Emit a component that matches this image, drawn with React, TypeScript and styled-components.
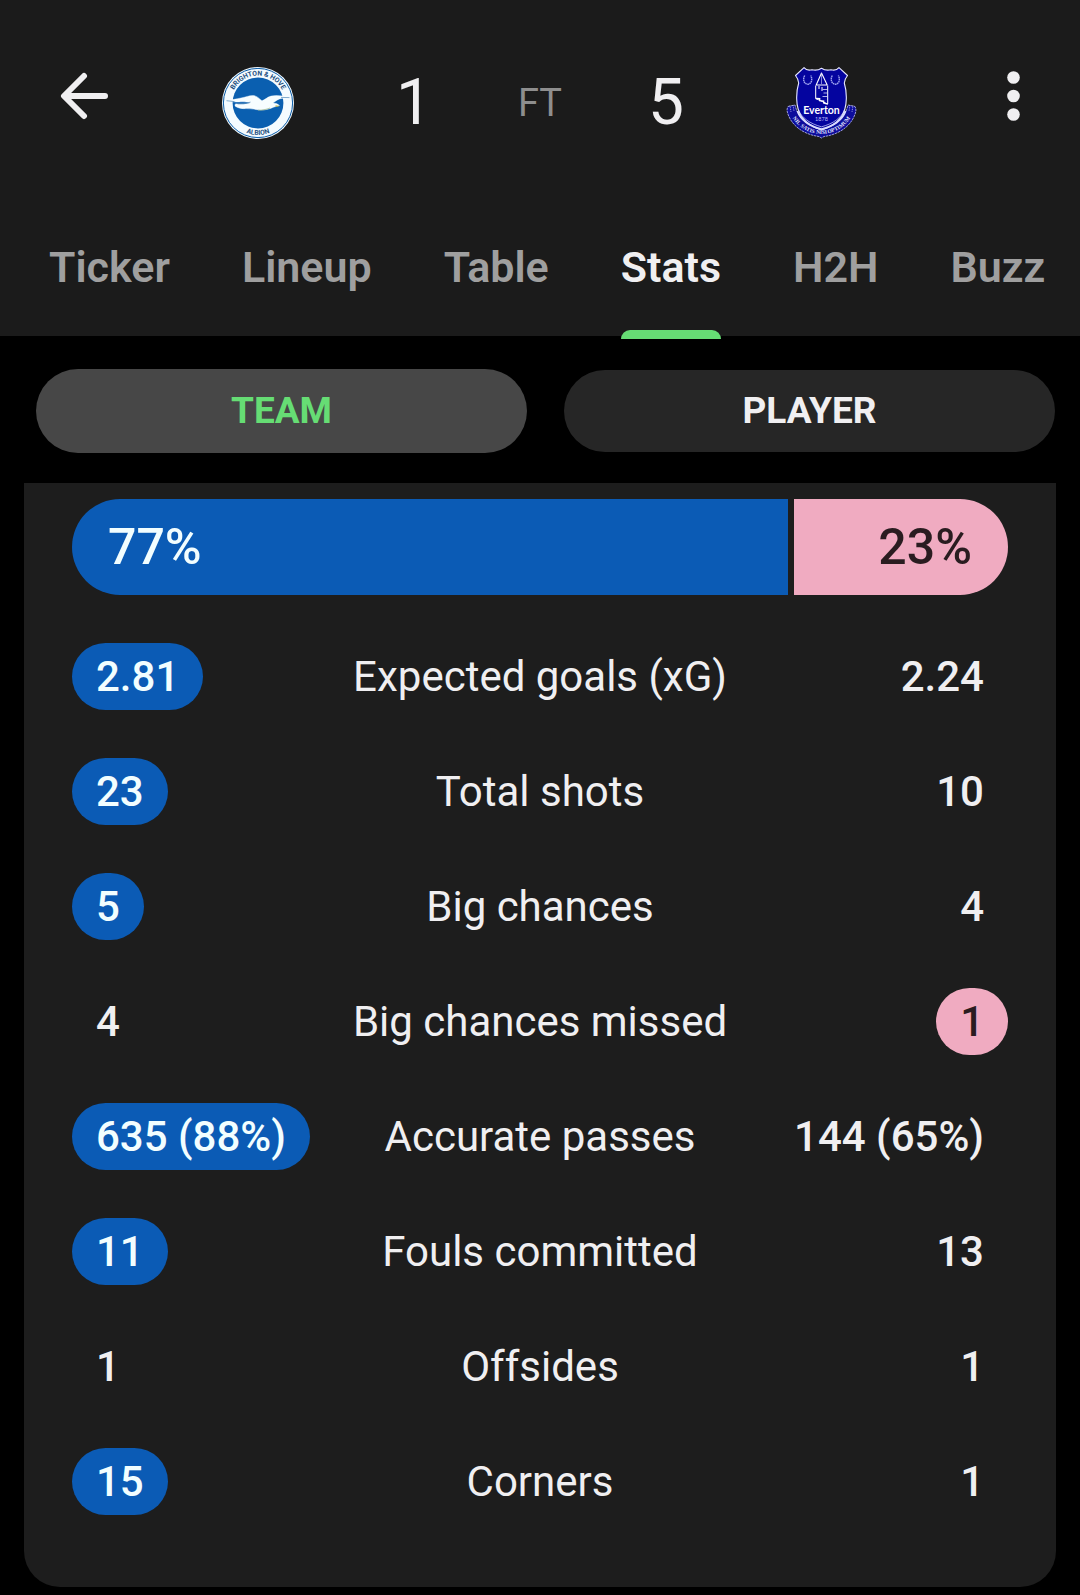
import React, { useState } from 'react';
import styled, { createGlobalStyle } from 'styled-components';

const color = {
  page: '#000000',
  header: '#1b1b1b',
  card: '#1d1d1d',
  text: '#f0eff1',
  muted: '#9f9f9f',
  faint: '#8e8e8e',
  accent: '#66dd74',
  home: '#0b5bb5',
  homeText: '#f2feff',
  away: '#f0abc1',
  awayText: '#2a1c20',
};

const GlobalStyle = createGlobalStyle`
  *, *::before, *::after { box-sizing: border-box; }
  body {
    margin: 0;
    background: ${color.page};
    color: ${color.text};
    font-family: Roboto, 'Liberation Sans', sans-serif;
  }
  button {
    margin: 0;
    padding: 0;
    border: 0;
    background: none;
    color: inherit;
    font: inherit;
    cursor: pointer;
  }
`;

const Header = styled.header`
  display: flex;
  flex-direction: column;
  background: ${color.header};
`;

const TopBar = styled.div`
  display: flex;
  align-items: center;
  justify-content: space-between;
  height: 192px;
  padding: 0 60px;
`;

const IconButton = styled.button<{ $end?: boolean }>`
  display: flex;
  justify-content: ${(p) => (p.$end ? 'flex-end' : 'flex-start')};
  width: 48px;
  color: ${color.text};
`;

const Match = styled.div`
  display: flex;
  align-items: center;
  gap: 102px;
  padding-top: 14px;
`;

const Result = styled.div`
  display: flex;
  align-items: center;
  gap: 86px;
`;

const Score = styled.span`
  font-size: 64px;
  line-height: 72px;
`;

const Status = styled.span`
  color: ${color.faint};
  font-size: 38px;
  line-height: 48px;
`;

const Tabs = styled.nav`
  display: flex;
  gap: 72px;
  margin-bottom: -3px;
  padding: 0 0 0 49px;
  overflow-x: auto;
  scrollbar-width: none;
`;

const Tab = styled.button<{ $active: boolean }>`
  position: relative;
  flex: none;
  padding: 51px 0 48px;
  color: ${(p) => (p.$active ? color.text : color.muted)};
  font-size: 43px;
  font-weight: 600;
  line-height: 48px;

  &::after {
    content: '';
    display: ${(p) => (p.$active ? 'block' : 'none')};
    position: absolute;
    right: 0;
    bottom: 0;
    left: 0;
    height: 9px;
    border-radius: 9px 9px 0 0;
    background: ${color.accent};
  }
`;

const Toggle = styled.div`
  display: flex;
  gap: 36px;
  padding: 33px 24px 30px 36px;
`;

const ToggleButton = styled.button<{ $active: boolean }>`
  flex: 1;
  height: 84px;
  border: ${(p) => (p.$active ? '0' : '1px solid transparent')};
  border-radius: 42px;
  background: ${(p) => (p.$active ? '#474747' : '#262626')};
  background-clip: padding-box;
  color: ${(p) => (p.$active ? color.accent : color.text)};
  font-size: 37px;
  font-weight: 700;
  line-height: 42px;
`;

const Card = styled.main`
  margin: 0 24px 8px;
  padding: 16px 48px 72px;
  border-radius: 0 0 36px 36px;
  background: ${color.card};
`;

const Possession = styled.div<{ $home: number; $away: number }>`
  display: grid;
  grid-template-columns: ${(p) => `minmax(0, ${p.$home}fr) minmax(0, ${p.$away}fr)`};
  gap: 6px;
  height: 96px;
  margin-bottom: 48px;
  border-radius: 48px;
  overflow: hidden;
`;

const Share = styled.div<{ $side: 'home' | 'away' }>`
  display: flex;
  align-items: center;
  justify-content: ${(p) => (p.$side === 'home' ? 'flex-start' : 'flex-end')};
  padding: 0 36px;
  background: ${(p) => color[p.$side]};
  color: ${(p) => (p.$side === 'home' ? color.homeText : color.awayText)};
  font-size: 50px;
  font-weight: 500;
  line-height: 56px;
`;

const Table = styled.table`
  display: block;
  width: 100%;
`;

const Rows = styled.tbody`
  display: flex;
  flex-direction: column;
  gap: 48px;
`;

const Row = styled.tr`
  display: grid;
  grid-template-columns: 1fr auto 1fr;
  align-items: center;
`;

const Label = styled.th`
  padding: 0;
  font-size: 42px;
  font-weight: 400;
  line-height: 49px;
`;

const Cell = styled.td<{ $side: 'home' | 'away' }>`
  display: flex;
  justify-content: ${(p) => (p.$side === 'home' ? 'flex-start' : 'flex-end')};
  padding: 0;
`;

const Value = styled.span<{ $lead?: 'home' | 'away' }>`
  padding: 9px 24px;
  border-radius: 34px;
  background: ${(p) => (p.$lead ? color[p.$lead] : 'transparent')};
  color: ${(p) =>
    p.$lead === 'home' ? color.homeText : p.$lead === 'away' ? color.awayText : color.text};
  font-size: 42px;
  font-weight: 500;
  line-height: 49px;
  white-space: nowrap;
`;

const Crest = styled.svg`
  display: block;
  flex: none;
  width: 72px;
  height: 72px;
`;

const BackIcon = () => (
  <svg width="48" height="48" viewBox="0 0 48 48" fill="none" stroke="currentColor" strokeWidth="6" strokeLinecap="round" strokeLinejoin="round" aria-hidden="true">
    <path d="M24 4 4 24l20 20M5 24h40" />
  </svg>
);

const MoreIcon = () => (
  <svg width="13" height="50" viewBox="0 0 13 50" fill="currentColor" aria-hidden="true">
    <circle cx="6.5" cy="6.5" r="6.3" />
    <circle cx="6.5" cy="25" r="6.3" />
    <circle cx="6.5" cy="43.5" r="6.3" />
  </svg>
);

const BrightonCrest = () => (
  <Crest viewBox="0 0 72 72" role="img" aria-label="Brighton &amp; Hove Albion">
    <defs>
      <path id="bha-top" d="M8.5 36a27.5 27.5 0 0 1 55 0" />
      <path id="bha-bottom" d="M4 36a32 32 0 0 0 64 0" />
    </defs>
    <circle cx="36" cy="36" r="36" fill="#f4fbff" />
    <circle cx="36" cy="36" r="34.6" fill="none" stroke="#0a5ca8" strokeWidth="1" />
    <circle cx="36" cy="36" r="25.4" fill="#0a5fb0" />
    <g fill="#1d4f80" fontFamily="Roboto, sans-serif" fontWeight="700" textAnchor="middle">
      <text fontSize="6.8"><textPath href="#bha-top" startOffset="50%">BRIGHTON &amp; HOVE</textPath></text>
      <text fontSize="6.8"><textPath href="#bha-bottom" startOffset="50%">ALBION</textPath></text>
    </g>
    <path
      fill="#f7fdff"
      stroke="#f7fdff"
      strokeWidth=".4"
      strokeLinejoin="round"
      d="M4.5 33.6C10 33 14 31.8 19 31c5-.9 8-2.6 12.5-2.4 3.600.3 5.500 2.800 8.500 5.200 2.500-.6 5-3.600 9-4.700 5-1.300 12-.4 18.500 1.300-3.500.8-7 .5-10 1.500-3 1.100-4.500 2.800-6.500 4.200 2.500 0 4.500.8 6.500 2.400-2 .7-4 1-6 1.700-4 1.800-8 3-13 2.800-5-.3-9-1.500-14-1.400-4 .2-8-.2-11-2.200-.8-.8-.7-1.900.2-2.600 5 1 10 .4 14.500-.9-3-1-7-1.300-11-1-4.500.1-8.500.1-12.700-1.300z"
    />
    <path d="M14.500 36.300c5 .6 9.500.3 14-1.200M4.500 33.700l8 .9M59 30.400l8.500.2" fill="none" stroke="#4d86b8" strokeWidth=".7" />
    <path d="M53.500 38.200l4.300.8-4 .9z" fill="#c3b64a" />
    <path d="M36 43.200c4 .1 8-.6 12-2.200" fill="none" stroke="#9fb98a" strokeWidth=".7" />
  </Crest>
);

const motto = [
  { word: 'NIL', at: '11%' },
  { word: 'SATIS', at: '30%' },
  { word: 'NISI', at: '50%' },
  { word: 'OPTIMUM', at: '77%' },
];

const EvertonCrest = () => (
  <Crest viewBox="0 0 72 72" role="img" aria-label="Everton">
    <defs>
      <path id="efc-motto" d="M5 48a34 34 0 0 0 61 0" />
    </defs>
    <path
      d="M2 39.500l7-1.500c3 13 13 22 26.500 24.500C49 60 59 51 62 38l7 1.500c1.500 3 .8 5.200.4 6.500C65.500 59 53 67.500 38 69.500l-2.500 1.500-2.500-1.500C18 67.500 5.500 59 1.600 46c-.4-1.300-1.100-3.500.4-6.500z"
      fill="#0d0d9c"
      stroke="#a9abe8"
      strokeWidth=".9"
      strokeDasharray="2.500 .7"
    />
    <path
      d="M35.500 1.200c-3 2-6.500 2.300-9.500 1.500-3 .8-6 .3-8-2L9.500 8.500c2 2.500 3 4.500 3.200 7.500-1.500 5-2.200 10-2 16 .3 14.500 6.500 25 24.800 31 18.300-6 24.500-16.500 24.800-31 .2-6-.5-11-2-16 .2-3 1.200-5 3.200-7.500L53 .7c-2 2.300-5 2.800-8 2-3 .8-6.500.5-9.500-1.500z"
      fill="#04049f"
      stroke="#e8e9ff"
      strokeWidth="1.100"
      strokeLinejoin="round"
    />
    <g fill="none" stroke="#d9dbff">
      <path d="M11.500 44C15 53.500 23 59 35.500 62.200 48 59 56 53.500 59.500 44" strokeWidth="2" />
      <path d="M12.500 43C16 51 23.500 56.500 35.500 59.800 47.500 56.500 55 51 58.500 43" strokeWidth=".7" />
      <path d="M4 38.500l1 6.500M7 38l1 6M67 38.500l-1 6.500M64 38l-1 6" strokeWidth=".7" strokeDasharray="1 .8" />
      <path d="M18.700 8.500c-2.200 4-.8 8.500 3 8.700 3.800-.2 5.200-4.700 3-8.700M46.300 8.500c-2.200 4-.8 8.500 3 8.700 3.800-.2 5.200-4.700 3-8.700" stroke="#9ea3ee" strokeWidth="1.400" strokeDasharray="1.600 .5" />
      <path d="M35.500 6l-5.300 12h11z" stroke="#fff" strokeWidth="1.100" strokeLinejoin="round" />
      <path d="M35.500 6v11" strokeWidth=".6" />
      <path d="M29.700 18.500v13l12 5.500V18.500M36 20v4M33 19v3" stroke="#fff" strokeWidth="1" />
      <path d="M29.700 31.500l4 .2v2l4 .3v2l4 1.200" stroke="#fff" strokeWidth="1.300" />
      <path d="M36.500 22.500h5M37.500 26h4M36.500 29.500h5" strokeWidth=".8" />
    </g>
    <g fill="#fff" textAnchor="middle">
      <text x="35.500" y="47" fontFamily="Lato, sans-serif" fontWeight="700" fontSize="10.500">Everton</text>
      <text x="35.500" y="54.200" fill="#b9bcf6" fontFamily="Lato, sans-serif" fontSize="5.500">1878</text>
    </g>
    <g fill="#e6e8ff" textAnchor="middle" fontFamily="'Liberation Serif', serif" fontWeight="700" fontSize="5.500">
      {motto.map(({ word, at }) => (
        <text key={word}>
          <textPath href="#efc-motto" startOffset={at}>{word}</textPath>
        </text>
      ))}
    </g>
  </Crest>
);

const tabs = ['Ticker', 'Lineup', 'Table', 'Stats', 'H2H', 'Buzz'];
const scopes = ['TEAM', 'PLAYER'];
const possession = { home: 77, away: 23 };

type Stat = { label: string; home: string; away: string; lead?: 'home' | 'away' };

const stats: Stat[] = [
  { label: 'Expected goals (xG)', home: '2.81', away: '2.24', lead: 'home' },
  { label: 'Total shots', home: '23', away: '10', lead: 'home' },
  { label: 'Big chances', home: '5', away: '4', lead: 'home' },
  { label: 'Big chances missed', home: '4', away: '1', lead: 'away' },
  { label: 'Accurate passes', home: '635 (88%)', away: '144 (65%)', lead: 'home' },
  { label: 'Fouls committed', home: '11', away: '13', lead: 'home' },
  { label: 'Offsides', home: '1', away: '1' },
  { label: 'Corners', home: '15', away: '1', lead: 'home' },
];

export default function App() {
  const [tab, setTab] = useState('Stats');
  const [scope, setScope] = useState('TEAM');

  return (
    <>
      <GlobalStyle />
      <Header>
        <TopBar>
          <IconButton type="button" aria-label="Back">
            <BackIcon />
          </IconButton>
          <Match>
            <BrightonCrest />
            <Result>
              <Score>1</Score>
              <Status>FT</Status>
              <Score>5</Score>
            </Result>
            <EvertonCrest />
          </Match>
          <IconButton type="button" aria-label="More options" $end>
            <MoreIcon />
          </IconButton>
        </TopBar>
        <Tabs>
          {tabs.map((name) => (
            <Tab
              key={name}
              type="button"
              $active={name === tab}
              aria-current={name === tab ? 'page' : undefined}
              onClick={() => setTab(name)}
            >
              {name}
            </Tab>
          ))}
        </Tabs>
      </Header>
      <Toggle>
        {scopes.map((name) => (
          <ToggleButton
            key={name}
            type="button"
            $active={name === scope}
            aria-pressed={name === scope}
            onClick={() => setScope(name)}
          >
            {name}
          </ToggleButton>
        ))}
      </Toggle>
      <Card>
        <Possession $home={possession.home} $away={possession.away}>
          <Share $side="home">{`${possession.home}%`}</Share>
          <Share $side="away">{`${possession.away}%`}</Share>
        </Possession>
        <Table>
          <Rows>
            {stats.map((s) => (
              <Row key={s.label}>
                <Cell $side="home">
                  <Value $lead={s.lead === 'home' ? 'home' : undefined}>{s.home}</Value>
                </Cell>
                <Label scope="row">{s.label}</Label>
                <Cell $side="away">
                  <Value $lead={s.lead === 'away' ? 'away' : undefined}>{s.away}</Value>
                </Cell>
              </Row>
            ))}
          </Rows>
        </Table>
      </Card>
    </>
  );
}
